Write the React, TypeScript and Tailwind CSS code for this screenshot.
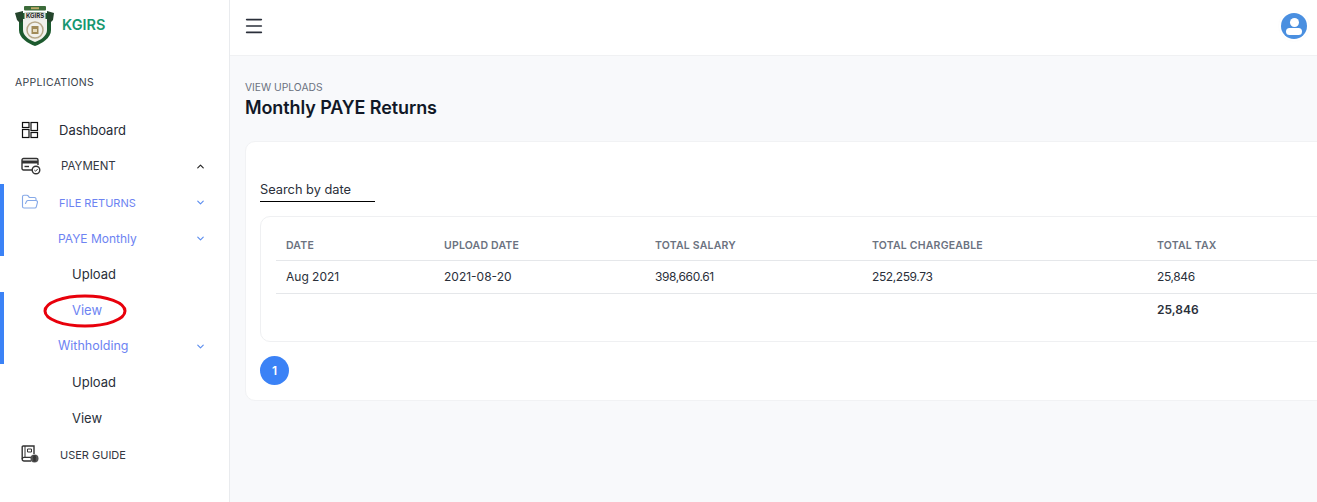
import { ChevronDown, ChevronUp, FolderOpen, Menu } from 'lucide-react';

const font = { fontFamily: 'Inter' };

const Logo = () => (
  <svg viewBox="0 0 40 40" className="w-[40px] h-[40px] shrink-0">
    <rect x="9" y="0" width="22" height="4.5" rx="1" fill="#3c6b3a" />
    <rect x="16" y="1.2" width="8" height="2" fill="#b9a866" />
    <path d="M4 8 C10 5.5 30 5.5 36 8 L36 24 C36 32 27 37.5 20 40 C13 37.5 4 32 4 24 Z" fill="#1c5a2e" />
    <path d="M8 13 L32 13 L32 24 C32 30 25 34.5 20 36 C15 34.5 8 30 8 24 Z" fill="#f1f1ec" />
    <path d="M0 7 L8 5 L8 15 L5 17 L2 14 Z M39 7 L32 5 L32 15 L35 17 L38 14 Z" fill="#24452c" />
    <rect x="9.5" y="6.5" width="21" height="7" fill="#e6e6e2" />
    <text x="20" y="12.2" textAnchor="middle" fontSize="6" fontWeight="700" fill="#222" fontFamily="Inter">KGIRS</text>
    <circle cx="20" cy="24" r="8" fill="none" stroke="#b8a98a" strokeWidth="1.5" />
    <rect x="16.5" y="20" width="7" height="8" fill="#a08a58" />
    <rect x="18" y="23" width="4" height="3" fill="#e6dcc0" />
  </svg>
);

const GridIcon = () => (
  <svg viewBox="0 0 18 18" className="w-[18px] h-[18px]" fill="none" stroke="#111" strokeWidth="1.2">
    <rect x="1.5" y="1.5" width="6.5" height="5" />
    <rect x="1.5" y="8.5" width="6.5" height="8" />
    <rect x="10" y="1.5" width="6.5" height="8" />
    <rect x="10" y="11.5" width="6.5" height="5" />
  </svg>
);

const PaymentIcon = () => (
  <svg viewBox="0 0 20 18" className="w-[20px] h-[18px]" fill="none" stroke="#333" strokeWidth="1.4">
    <path d="M11 13 H2.5 A1.5 1.5 0 0 1 1 11.5 V3 A1.5 1.5 0 0 1 2.5 1.5 H15.5 A1.5 1.5 0 0 1 17 3 V8" />
    <rect x="1" y="3.5" width="16" height="3" fill="#333" stroke="none" />
    <path d="M3.5 9.5 H8" />
    <circle cx="15" cy="13" r="3.8" fill="#fff" />
    <path d="M13.3 13 L14.6 14.2 L16.7 12" strokeWidth="1" />
  </svg>
);

const GuideIcon = () => (
  <svg viewBox="0 0 18 18" className="w-[18px] h-[18px]" fill="none" stroke="#333" strokeWidth="1.4">
    <path d="M10 16 H3 A1.8 1.8 0 0 1 1.2 14.2 V2 A1 1 0 0 1 2.2 1 H13 V9" />
    <path d="M1.2 14 A1.8 1.8 0 0 1 3 12.4 H10" />
    <path d="M4 1 V12" strokeWidth="1" />
    <path d="M6.5 4 H10.5 V7 H6.5 Z" strokeWidth="1" />
    <circle cx="13.5" cy="13.5" r="4" fill="#555" stroke="none" />
    <rect x="12.9" y="12.8" width="1.2" height="3" fill="#fff" />
    <rect x="12.9" y="11" width="1.2" height="1.2" fill="#fff" />
  </svg>
);

const SubItem = ({ label, active }: { label: string; active?: boolean }) => (
  <div className={`h-9 flex items-center pl-[72px] text-[13px] ${active ? 'text-[#6d83f2]' : 'text-[#2a2f3a]'}`}>
    <span className="mt-[2px]">{label}</span>
  </div>
);

const GroupItem = ({ label, className }: { label: string; className: string }) => (
  <div className="h-9 flex items-center pl-[58px] pr-[23px] justify-between text-[#6d83f2]">
    <span className={`mt-[1px] ${className}`}>{label}</span>
    <ChevronDown className="w-[11px] h-[11px] text-[#5b8def]" strokeWidth={2.5} />
  </div>
);

const TopItem = ({ icon, label, right, className }: any) => (
  <div className={`h-9 flex items-center pl-[21px] pr-[23px] ${className}`}>
    <span className="w-[39px] shrink-0 flex">{icon}</span>
    <span className="flex-1 flex mt-[2px]">{label}</span>
    {right}
  </div>
);

const Row = ({ cells, className }: { cells: string[]; className: string }) => (
  <div className={`grid grid-cols-[158px_211px_217px_285px_200px] pl-[10px] items-center ${className}`}>
    {cells.map((c, i) => (
      <span key={i}>{c}</span>
    ))}
  </div>
);

export default function App() {
  return (
    <div className="relative w-[1317px] h-[502px] flex overflow-hidden bg-[#f8f9fb]" style={font}>
      {/* Sidebar */}
      <aside className="w-[230px] shrink-0 bg-white border-r border-[#e9ebee] flex flex-col">
        <div className="h-[56px] flex items-center pl-[15px] gap-[7px] pb-[4px]">
          <Logo />
          <span className="text-[14.5px] font-semibold text-[#16976f] mb-[2px]">KGIRS</span>
        </div>
        <div className="pl-[15px] mt-[20px] mb-[23px] text-[10.5px] leading-[13px] tracking-[0.3px] text-[#3a3f4b]">APPLICATIONS</div>
        <TopItem icon={<GridIcon />} label={<span className="text-[13px] -ml-[1px]">Dashboard</span>} className="text-[#262b36]" />
        <TopItem
          icon={<PaymentIcon />}
          label={<span className="pl-[1px] text-[11.5px]">PAYMENT</span>}
          right={<ChevronUp className="w-[11px] h-[11px] text-[#222]" strokeWidth={2.5} />}
          className="text-[#333842]"
        />
        <div className="border-l-4 border-[#3b82f6] -mb-[36px] h-[72px] w-[4px] shrink-0" />
        <TopItem
          icon={<FolderOpen className="w-[18px] h-[18px] text-[#86a9e8]" strokeWidth={1.5} />}
          label={<span className="text-[11px] -ml-[1px]">FILE RETURNS</span>}
          right={<ChevronDown className="w-[11px] h-[11px] text-[#5b8def]" strokeWidth={2.5} />}
          className="text-[#6d83f2] -mt-[36px]"
        />
        <GroupItem label="PAYE Monthly" className="text-[12px]" />
        <SubItem label="Upload" />
        <div className="border-l-4 border-[#3b82f6] -mb-[72px] h-[72px] w-[4px] shrink-0" />
        <SubItem label="View" active />
        <GroupItem label="Withholding" className="text-[12.5px]" />
        <SubItem label="Upload" />
        <SubItem label="View" />
        <TopItem icon={<GuideIcon />} label={<span className="text-[11px]">USER GUIDE</span>} className="text-[#333842]" />
      </aside>

      {/* Main */}
      <div className="flex-1 min-w-0 flex flex-col">
        <header className="h-[56px] shrink-0 bg-white border-b border-[#f0f1f3] flex items-center justify-between pl-[13px] pr-[10px] pb-[4px]">
          <Menu className="w-[22px] h-[22px] text-[#2a2f3a]" strokeWidth={1.8} />
          <div className="w-[26px] h-[26px] rounded-full bg-[#4a8fe0] ring-2 ring-white shadow-[0_0_3px_rgba(0,0,0,0.25)] overflow-hidden flex flex-col items-center pt-[5px] gap-[1px]">
            <span className="w-[9px] h-[9px] rounded-full bg-white" />
            <span className="w-[16px] h-[7px] rounded-full bg-white" />
          </div>
        </header>

        <main className="pl-[15px] pt-[25px]">
          <div className="text-[10.3px] leading-[13px] text-[#6b7280]">VIEW UPLOADS</div>
          <h1 className="text-[18px] leading-[27px] font-semibold text-[#111827] tracking-[-0.1px]">Monthly PAYE Returns</h1>

          <section className="mt-[20px] w-[1200px] h-[260px] bg-white rounded-[10px] border border-[#f1f2f4] pl-[14px] pt-[39px]">
            <div className="w-[115px] h-[21px] border-b border-black text-[12.8px] leading-[18px] text-[#2a2f3a]">Search by date</div>
            <div className="mt-[14px] h-[126px] rounded-[10px] border border-[#eff0f2] pl-[15px] pt-[10px]">
              <Row
                cells={['DATE', 'UPLOAD DATE', 'TOTAL SALARY', 'TOTAL CHARGEABLE', 'TOTAL TAX']}
                className="h-[34px] pt-[4px] border-b border-[#e5e7ea] text-[10.5px] font-semibold tracking-[0.2px] text-[#6b7280]"
              />
              <Row
                cells={['Aug 2021', '2021-08-20', '398,660.61', '252,259.73', '25,846']}
                className="h-[33px] border-b border-[#e5e7ea] text-[12px] text-[#2a2f3a] [&>*:nth-child(n+3)]:tracking-[-0.4px]"
              />
              <Row cells={['', '', '', '', '25,846']} className="h-[31px] text-[12px] font-semibold text-[#2a2f3a]" />
            </div>
            <div className="mt-[14px] w-[29px] h-[29px] rounded-full bg-[#3b82f6] text-white text-[12px] font-semibold flex items-center justify-center">1</div>
          </section>
        </main>
      </div>

      {/* Red annotation circle */}
      <svg className="absolute left-[42px] top-[294px] w-[86px] h-[34px]" viewBox="0 0 86 34" fill="none">
        <ellipse cx="43" cy="17" rx="40" ry="15" stroke="#e8000b" strokeWidth="3" />
      </svg>
    </div>
  );
}
